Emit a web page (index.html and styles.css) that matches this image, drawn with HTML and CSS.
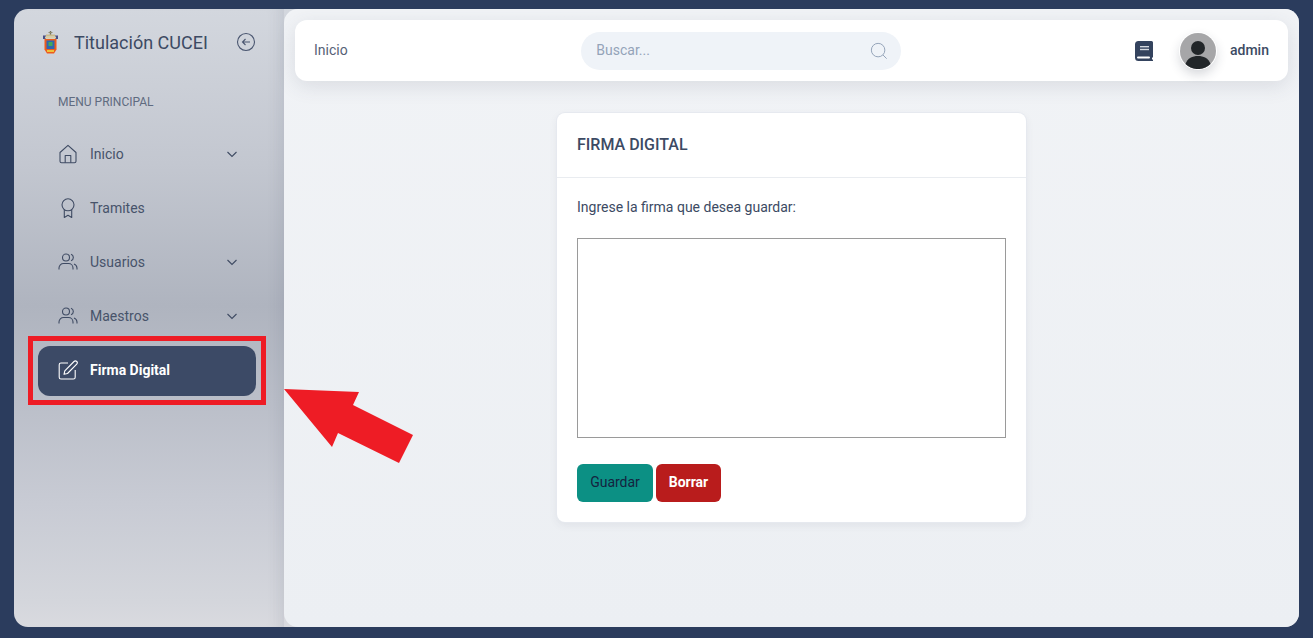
FILE: index.html
```html
<!DOCTYPE html>
<html lang="es">
<head>
    <meta charset="UTF-8">
    <meta name="viewport" content="width=device-width, initial-scale=1.0">
    <title>Titulación CUCEI</title>
    <link rel="stylesheet" href="styles.css">
</head>
<body>
<div class="shell">
    <!-- Sidebar -->
    <aside class="sidebar">
        <div class="brand">
            <svg class="crest" viewBox="0 0 17 23" width="17" height="23">
                <rect x="7.800" y="0" width="1.400" height="4" fill="#77755c"/>
                <rect x="6.500" y="1" width="4" height="1" fill="#8f8c70"/>
                <path d="M4 3.500h9v2H4z" fill="#c9b98a"/>
                <path d="M1 4.500h3v3.500H1zM13 4.500h3v3.500h-3z" fill="#4a4f86"/>
                <rect x="3" y="5.500" width="11" height="2" fill="#d8cfa8"/>
                <path d="M2.500 8h12v10.500l-2.500 4H5l-2.500-4z" fill="#ee5a1c"/>
                <rect x="4.500" y="9.500" width="8" height="8.500" fill="#2f66b0"/>
                <rect x="6.500" y="11" width="4" height="4" fill="#45a858"/>
                <rect x="5" y="19" width="7" height="2" fill="#eec23a"/>
            </svg>
            <span class="brand-name">Titulación CUCEI</span>
            <svg class="collapse" viewBox="0 0 20 20" width="20" height="20" fill="none" stroke="#4a5670" stroke-width="1.100">
                <circle cx="10" cy="10" r="8.500"/>
                <path d="M14 10H6.500M9.500 7l-3 3 3 3"/>
            </svg>
        </div>
        <div class="menu-title">MENU PRINCIPAL</div>
        <nav class="menu">
            <a class="menu-item">
                <svg class="menu-icon" viewBox="0 0 20 20" fill="none" stroke="#3f4b63" stroke-width="1.100" stroke-linejoin="round">
                    <path d="M2 8.500 10 1.300l8 7.200v8.700a1.600 1.600 0 0 1-1.600 1.600H3.600A1.600 1.600 0 0 1 2 17.200z"/>
                    <path d="M7.200 18.800v-7.300h5.600v7.300"/>
                </svg>
                <span>Inicio</span>
                <svg class="chevron" viewBox="0 0 12 12" fill="none" stroke="#3f4b63" stroke-width="1.100"><path d="M1.500 4 6 8.500 10.500 4"/></svg>
            </a>
            <a class="menu-item">
                <svg class="menu-icon" viewBox="0 0 20 20" fill="none" stroke="#3f4b63" stroke-width="1.100" stroke-linejoin="round">
                    <circle cx="10" cy="6.800" r="6"/>
                    <path d="M6.300 11.800v7.700l3.700-2.200 3.700 2.200v-7.700"/>
                </svg>
                <span>Tramites</span>
            </a>
            <a class="menu-item">
                <svg class="menu-icon" viewBox="0 0 20 20" fill="none" stroke="#3f4b63" stroke-width="1.100">
                    <circle cx="8" cy="5.500" r="3.500"/>
                    <path d="M1 17.500v-1.500a4.500 4.500 0 0 1 4.500-4.500h5A4.500 4.500 0 0 1 15 16v1.500"/>
                    <path d="M13 2.200a3.500 3.500 0 0 1 0 6.600M16 12a4.500 4.500 0 0 1 3 4v1.500"/>
                </svg>
                <span>Usuarios</span>
                <svg class="chevron" viewBox="0 0 12 12" fill="none" stroke="#3f4b63" stroke-width="1.100"><path d="M1.500 4 6 8.500 10.500 4"/></svg>
            </a>
            <a class="menu-item">
                <svg class="menu-icon" viewBox="0 0 20 20" fill="none" stroke="#3f4b63" stroke-width="1.100">
                    <circle cx="8" cy="5.500" r="3.500"/>
                    <path d="M1 17.500v-1.500a4.500 4.500 0 0 1 4.500-4.500h5A4.500 4.500 0 0 1 15 16v1.500"/>
                    <path d="M13 2.200a3.500 3.500 0 0 1 0 6.600M16 12a4.500 4.500 0 0 1 3 4v1.500"/>
                </svg>
                <span>Maestros</span>
                <svg class="chevron" viewBox="0 0 12 12" fill="none" stroke="#3f4b63" stroke-width="1.100"><path d="M1.500 4 6 8.500 10.500 4"/></svg>
            </a>
            <a class="menu-item active">
                <svg class="menu-icon" viewBox="0 0 20 20" fill="none" stroke="#fff" stroke-width="1.100" stroke-linejoin="round">
                    <path d="M10 3H3a1.800 1.800 0 0 0-1.800 1.800v12.400A1.800 1.800 0 0 0 3 19h12.400a1.800 1.800 0 0 0 1.800-1.800V10"/>
                    <path d="M16 1.500a1.900 1.900 0 0 1 2.700 2.700L9.500 13.500l-3.500.8.800-3.500z"/>
                </svg>
                <span>Firma Digital</span>
            </a>
        </nav>
    </aside>

    <!-- Main content -->
    <main class="content">
        <header class="topbar">
            <span class="page-name">Inicio</span>
            <div class="search">
                <span class="search-text">Buscar...</span>
                <svg viewBox="0 0 20 20" width="18" height="18" fill="none" stroke="#94a3b8" stroke-width="1.100">
                    <circle cx="9" cy="9" r="7.500"/>
                    <path d="m14.500 14.500 4 4"/>
                </svg>
            </div>
            <div class="user-area">
                <svg class="book" viewBox="0 0 18 20" width="18" height="20">
                    <path d="M3.500 0H16.500A1.500 1.500 0 0 1 18 1.500V16l-1 1v1.500h1V20H3.500A3.500 3.500 0 0 1 0 16.500V3.500A3.500 3.500 0 0 1 3.500 0z" fill="#34435e"/>
                    <rect x="5" y="5" width="9" height="1.400" fill="#d5d9e0"/>
                    <rect x="5" y="7.800" width="9" height="1.400" fill="#d5d9e0"/>
                    <rect x="2" y="15.500" width="13" height="2" rx="1" fill="#fff"/>
                </svg>
                <div class="avatar">
                    <svg viewBox="0 0 36 36" width="36" height="36">
                        <circle cx="18" cy="18" r="18" fill="#a6a6a8"/>
                        <circle cx="18" cy="15" r="7" fill="#222629"/>
                        <path d="M5.500 31c2-6 7-8 12.500-8s10.500 2 12.500 8a18 18 0 0 1-25 0z" fill="#222629"/>
                    </svg>
                </div>
                <span class="user-name">admin</span>
            </div>
        </header>

        <section class="card">
            <h2 class="card-title">FIRMA DIGITAL</h2>
            <div class="card-body">
                <p class="card-text">Ingrese la firma que desea guardar:</p>
                <div class="signature"></div>
                <div class="actions">
                    <button type="button" class="btn btn-save">Guardar</button>
                    <button type="button" class="btn btn-clear">Borrar</button>
                </div>
            </div>
        </section>
    </main>
</div>

<!-- Annotations drawn over the screenshot -->
<div class="mark-box"></div>
<svg class="mark-arrow" viewBox="0 0 132 76" width="132" height="76">
    <polygon points="1,1 76,4 70,17 130,47 116,75 55,45 49,59" fill="#ee1c25"/>
</svg>
</body>
</html>
```

FILE: styles.css
```css
* {
    box-sizing: border-box;
}
body {
    margin: 0;
    height: 638px;
    padding: 9px 14px 11px;
    overflow: hidden;
    background-color: #2b3c5d;
    font-family: Roboto, "Liberation Sans", sans-serif;
    color: #3c4a63;
}
.shell {
    display: flex;
    height: 618px;
    border-radius: 14px;
    overflow: hidden;
    background: linear-gradient(180deg, #d3d7de 0%, #c3c7d0 25%, #afb4bf 48%, #bbbfc9 64%, #c8cbd4 80%, #d4d6dc 96%, #d9dadf 100%);
}

/* Sidebar */
.sidebar {
    width: 270px;
    flex-shrink: 0;
    padding: 0 28px 0 24px;
    box-shadow: inset -14px 0 12px -8px rgba(70, 80, 100, 0.09);
}
.brand {
    display: flex;
    align-items: center;
    height: 66px;
}
.crest {
    margin-left: 4px;
}
.brand-name {
    margin-left: 15px;
    font-size: 18px;
    color: #3c4a63;
}
.collapse {
    margin-left: auto;
}
.menu-title {
    margin: 20px 0 0 20px;
    font-size: 12px;
    line-height: 14px;
    color: #5f6b80;
}
.menu {
    display: flex;
    flex-direction: column;
    gap: 4px;
    margin-top: 21px;
}
.menu-item {
    display: flex;
    align-items: center;
    height: 50px;
    padding: 0 18px 2px 21px;
    border-radius: 12px;
    font-size: 14px;
    color: #47536a;
}
.menu-icon {
    width: 20px;
    height: 20px;
    margin-left: -1px;
    margin-right: 12px;
    flex-shrink: 0;
}
.chevron {
    width: 12px;
    height: 12px;
    margin-left: auto;
}
.menu-item.active {
    background: #3c4a66;
    color: #fff;
    font-weight: 700;
}

/* Main */
.content {
    flex: 1;
    padding: 11px;
    border-radius: 14px 0 0 14px;
    background: linear-gradient(180deg, #f1f3f6 0%, #eceff3 100%);
}
.topbar {
    display: flex;
    align-items: center;
    justify-content: space-between;
    height: 61px;
    padding: 0 19px;
    border-radius: 12px;
    background: #fff;
    box-shadow: 0 5px 20px rgba(60, 70, 90, 0.13);
}
.page-name {
    padding-bottom: 2px;
    font-size: 14px;
    color: #566176;
}
.search {
    display: flex;
    align-items: center;
    justify-content: space-between;
    width: 320px;
    height: 38px;
    padding: 0 13px 0 15px;
    border-radius: 19px;
    background: #eff3f8;
    font-size: 14px;
    color: #94a3b8;
}
.search-text {
    padding-bottom: 2px;
}
.user-area {
    display: flex;
    align-items: center;
}
.avatar {
    width: 36px;
    height: 36px;
    margin-left: 27px;
    border-radius: 50%;
    box-shadow: 0 0 0 1px #fff, 0 5px 12px rgba(30, 40, 60, 0.2);
}
.user-name {
    margin-left: 14px;
    padding-bottom: 2px;
    font-size: 14px;
    font-weight: 500;
}

/* Card */
.card {
    width: 469px;
    margin: 32px auto 0;
    border-radius: 8px;
    background: #fff;
    box-shadow: 0 0 0 1px #e6e9ef, 0 3px 8px rgba(60, 70, 90, 0.08);
}
.card-title {
    margin: 0;
    padding: 0 20px;
    height: 65px;
    line-height: 63px;
    border-bottom: 1px solid #e9ecf0;
    font-size: 16px;
    font-weight: 500;
}
.card-body {
    padding: 20px;
}
.card-text {
    margin: 0;
    font-size: 14px;
    line-height: 18px;
}
.signature {
    height: 200px;
    margin-top: 22px;
    border: 1px solid #9a9a9a;
}
.actions {
    display: flex;
    gap: 3px;
    margin-top: 26px;
}
.btn {
    height: 38px;
    padding: 0 0 2px;
    border: none;
    border-radius: 6px;
    font-family: inherit;
    font-size: 14px;
}
.btn-save {
    width: 76px;
    background: #0c9084;
    color: #14233f;
}
.btn-clear {
    width: 65px;
    background: #b91c1c;
    color: #fff;
    font-weight: 700;
}

/* Annotations */
.mark-box {
    position: absolute;
    left: 28px;
    top: 336px;
    width: 238px;
    height: 69px;
    border: 5px solid #ee1c25;
}
.mark-arrow {
    position: absolute;
    left: 283px;
    top: 388px;
}
```
